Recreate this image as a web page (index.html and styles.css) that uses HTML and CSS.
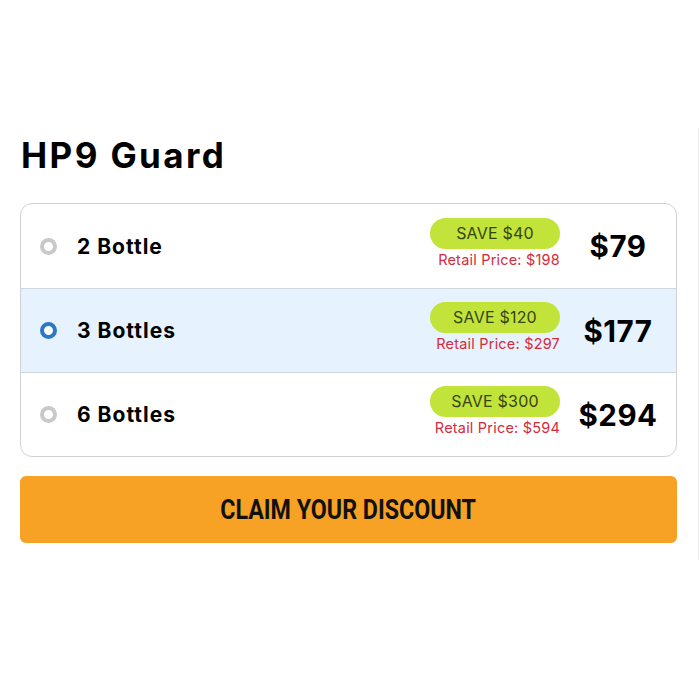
FILE: index.html
```html
<!DOCTYPE html>
<html lang="en">
<head>
    <meta charset="UTF-8">
    <meta name="viewport" content="width=device-width, initial-scale=1.0">
    <title>HP9 Guard</title>
    <link rel="stylesheet" href="styles.css">
</head>
<body>
    <div class="panel">
        <h1 class="title">HP9 Guard</h1>

        <div class="options">
            <label class="option">
                <span class="radio"></span>
                <span class="name">2 Bottle</span>
                <span class="deal">
                    <span class="save">SAVE $40</span>
                    <span class="retail">Retail Price: $198</span>
                </span>
                <span class="price">$79</span>
            </label>
            <label class="option selected">
                <span class="radio"></span>
                <span class="name">3 Bottles</span>
                <span class="deal">
                    <span class="save">SAVE $120</span>
                    <span class="retail">Retail Price: $297</span>
                </span>
                <span class="price">$177</span>
            </label>
            <label class="option">
                <span class="radio"></span>
                <span class="name">6 Bottles</span>
                <span class="deal">
                    <span class="save">SAVE $300</span>
                    <span class="retail">Retail Price: $594</span>
                </span>
                <span class="price">$294</span>
            </label>
        </div>

        <button class="claim"><span>CLAIM YOUR DISCOUNT</span></button>
    </div>
</body>
</html>
```

FILE: styles.css
```css
* {
    box-sizing: border-box;
}

body {
    margin: 0;
    padding: 128px 0 0 20px;
    background: #fff;
    font-family: Inter, "Noto Sans", sans-serif;
    color: #000;
}

.panel {
    width: 679px;
    padding: 6px 21px 17px 0;
    border-right: 1px solid #ececec;
    min-height: 432px;
}

.title {
    margin: 0 0 27px 1px;
    font-size: 35px;
    font-weight: 700;
    letter-spacing: 2.4px;
    line-height: 42px;
}

.options {
    border: 1px solid #cfd3d6;
    border-radius: 12px;
    overflow: hidden;
}

.option {
    display: flex;
    align-items: center;
    height: 84px;
    padding: 0 0 0 19px;
    border-top: 1px solid #cfd6dc;
}

.option:first-child {
    border-top: none;
}

.option.selected {
    background: #e6f2fd;
}

.radio {
    width: 17px;
    height: 17px;
    border-radius: 50%;
    border: 4px solid #c9c9c9;
    background: #fff;
    flex-shrink: 0;
}

.selected .radio {
    border-color: #2b77c8;
}

.name {
    flex: 1;
    margin-left: 20px;
    font-size: 21px;
    font-weight: 700;
    letter-spacing: 1px;
}

.deal {
    display: flex;
    flex-direction: column;
    align-items: flex-end;
    gap: 2px;
    margin-top: -7px;
}

.save {
    width: 130px;
    height: 31px;
    line-height: 31px;
    text-align: center;
    background: #c2e33a;
    border-radius: 16px;
    color: #354510;
    font-size: 16px;
    letter-spacing: 0.2px;
}

.retail {
    color: #d52b3c;
    font-size: 14.5px;
    letter-spacing: 0.2px;
}

.price {
    width: 116px;
    text-align: center;
    font-size: 29.5px;
    font-weight: 700;
    letter-spacing: 0.5px;
}

.claim {
    display: block;
    width: 100%;
    height: 67px;
    margin-top: 19px;
    border: none;
    border-radius: 6px;
    background: #f7a125;
    cursor: pointer;
}

.claim span {
    display: inline-block;
    font-family: Roboto, sans-serif;
    font-weight: 700;
    font-size: 28px;
    color: #111;
    transform: scaleX(0.83);
}
```
